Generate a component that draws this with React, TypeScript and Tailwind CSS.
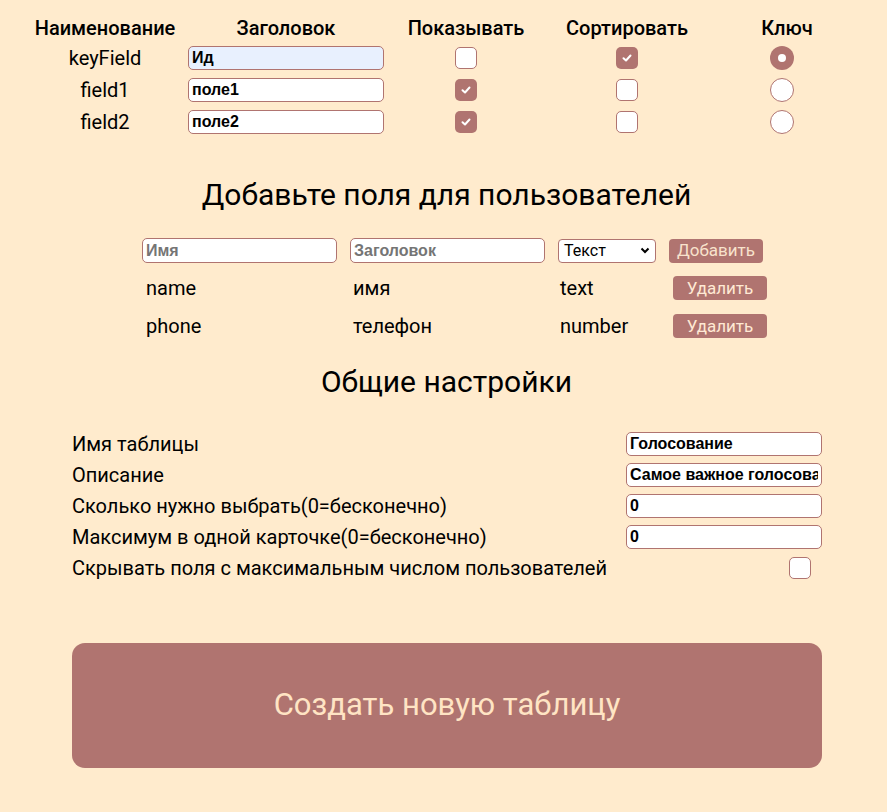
import React from 'react'

const accent = 'bg-[#b07470]'

function Check({ checked }: { checked: boolean }) {
  return (
    <div
      className={
        checked
          ? 'w-[22px] h-[22px] rounded-[5px] bg-[#b07470] flex items-center justify-center'
          : 'w-[22px] h-[22px] rounded-[5px] bg-white border border-[#b07470]'
      }
    >
      {checked && (
        <svg width="10" height="8" viewBox="0 0 10 8">
          <path d="M1.5 4.2 L4 6.5 L8.5 1.5" stroke="white" strokeWidth="2" fill="none" strokeLinecap="round" strokeLinejoin="round" />
        </svg>
      )}
    </div>
  )
}

function Radio({ checked }: { checked: boolean }) {
  return checked ? (
    <div className="w-6 h-6 rounded-full bg-[#b07470] flex items-center justify-center">
      <div className="w-2 h-2 rounded-full bg-white" />
    </div>
  ) : (
    <div className="w-6 h-6 rounded-full bg-white border border-[#b07470]" />
  )
}

function TextBox({ value, className = '' }: { value: string; className?: string }) {
  return (
    <input
      readOnly
      value={value}
      className={
        'h-6 rounded-[5px] border border-[#b07470] px-[3px] text-[16px] font-bold text-black outline-none font-["Liberation_Sans",Arial,sans-serif] ' +
        className
      }
    />
  )
}

const fields = [
  { name: 'keyField', title: 'Ид', show: false, sort: true, key: true },
  { name: 'field1', title: 'поле1', show: true, sort: false, key: false },
  { name: 'field2', title: 'поле2', show: true, sort: false, key: false },
]

const userFields = [
  { name: 'name', title: 'имя', type: 'text' },
  { name: 'phone', title: 'телефон', type: 'number' },
]

const settings = [
  { label: 'Имя таблицы', value: 'Голосование' },
  { label: 'Описание', value: 'Самое важное голосование' },
  { label: 'Сколько нужно выбрать(0=бесконечно)', value: '0' },
  { label: 'Максимум в одной карточке(0=бесконечно)', value: '0' },
]

export default function App() {
  return (
    <div className="min-h-[812px] w-full bg-[#ffebcd] text-black font-['Roboto',sans-serif] pt-[14px]">
      {/* fields table */}
      <div className="ml-[30px] grid grid-cols-[150px_212px_148px_174px_146px] items-center">
        {['Наименование', 'Заголовок', 'Показывать', 'Сортировать', 'Ключ'].map((h) => (
          <div key={h} className="text-center text-[20px] font-medium h-[28px] leading-[28px]">
            {h}
          </div>
        ))}
        {fields.map((f) => (
          <React.Fragment key={f.name}>
            <div className="text-center text-[20px] h-8 leading-8">{f.name}</div>
            <div className="flex justify-center">
              <TextBox value={f.title} className={'w-[196px] ' + (f.key ? 'bg-[#e8f0fe]' : 'bg-white')} />
            </div>
            <div className="flex justify-center">
              <Check checked={f.show} />
            </div>
            <div className="flex justify-center">
              <Check checked={f.sort} />
            </div>
            <div className="flex justify-center pr-[10px]">
              <Radio checked={f.key} />
            </div>
          </React.Fragment>
        ))}
      </div>

      {/* user fields */}
      <h2 className="mt-[37px] text-center text-[30px] leading-[40px] pl-[6px]">Добавьте поля для пользователей</h2>
      <div className="mt-[23px] ml-[142px] flex items-center gap-[13px]">
        <input
          readOnly
          placeholder="Имя"
          className="w-[195px] h-[25px] rounded-[5px] border border-[#b07470] bg-white px-[3px] text-[16px] font-bold outline-none placeholder:text-[#757575] font-['Liberation_Sans',Arial,sans-serif]"
        />
        <input
          readOnly
          placeholder="Заголовок"
          className="w-[195px] h-[25px] rounded-[5px] border border-[#b07470] bg-white px-[3px] text-[16px] font-bold outline-none placeholder:text-[#757575] font-['Liberation_Sans',Arial,sans-serif]"
        />
        <div className="w-[98px] h-[24px] rounded-[4px] border border-[#b07470] bg-white flex items-center justify-between px-[5px]">
          <span className="text-[16px]">Текст</span>
          <svg width="10" height="7" viewBox="0 0 10 7">
            <path d="M1.5 1.5 L5 5 L8.5 1.5" stroke="black" strokeWidth="2" fill="none" />
          </svg>
        </div>
        <button className={accent + ' w-[94px] h-[24px] rounded-[4px] text-[#f8e2cc] text-[17px] leading-none'}>Добавить</button>
      </div>
      {userFields.map((u, i) => (
        <div key={u.name} className={'ml-[146px] flex items-center h-[24px] ' + (i === 0 ? 'mt-[13px]' : 'mt-[14px]')}>
          <div className="w-[207px] text-[20px]">{u.name}</div>
          <div className="w-[207px] text-[20px]">{u.title}</div>
          <div className="w-[113px] text-[20px]">{u.type}</div>
          <button className={accent + ' w-[94px] h-[24px] rounded-[4px] text-[#ffe9d4] text-[17px] leading-none'}>Удалить</button>
        </div>
      ))}

      {/* general settings */}
      <h2 className="mt-[24px] text-center text-[30px] leading-[40px] pl-[6px]">Общие настройки</h2>
      <div className="mt-[30px] ml-[72px] w-[750px] flex flex-col gap-[7px]">
        {settings.map((s) => (
          <div key={s.label} className="flex items-center justify-between h-[24px]">
            <span className="text-[20px]">{s.label}</span>
            <TextBox value={s.value} className="w-[196px] bg-white" />
          </div>
        ))}
        <div className="flex items-center justify-between h-[24px]">
          <span className="text-[20px]">Скрывать поля с максимальным числом пользователей</span>
          <div className="mr-[11px]">
            <Check checked={false} />
          </div>
        </div>
      </div>

      <button className={accent + ' mt-[63px] ml-[72px] w-[750px] h-[125px] rounded-[13px] text-[#ffe4c4] text-[31px]'}>
        Создать новую таблицу
      </button>
    </div>
  )
}
